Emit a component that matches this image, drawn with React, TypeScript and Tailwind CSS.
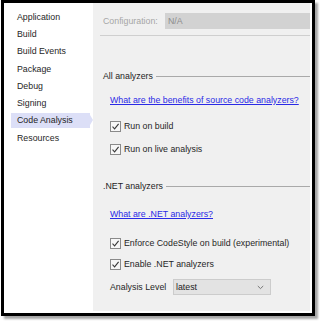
import React from "react";

const font = { fontFamily: '"Liberation Sans", Arial, sans-serif' };

function Check({ label, mt }: { label: string; mt: string }) {
  return (
    <div className={`flex items-center h-[12px] ml-[7px] ${mt}`}>
      <div className="w-[11px] h-[11px] border border-[#8a8a8a] bg-[#f7f7f7] flex items-center justify-center">
        <svg width="9" height="9" viewBox="0 0 9 9">
          <path d="M1.5 4.6 L3.6 6.8 L7.6 1.8" fill="none" stroke="#3a3a3a" strokeWidth="1.1" />
        </svg>
      </div>
      <span className="ml-[3px] text-[#262626]">{label}</span>
    </div>
  );
}

function Section({ label, mt, lineStart }: { label: string; mt: string; lineStart: string }) {
  return (
    <div className={`flex items-center h-[12px] ${mt}`}>
      <span className="text-[#1e1e1e] whitespace-nowrap">{label}</span>
      <div className={`flex-1 h-px bg-[#a9a9a9] ${lineStart}`} />
    </div>
  );
}

export default function App() {
  const items = ["Application", "Build", "Build Events", "Package", "Debug", "Signing", "Code Analysis", "Resources"];
  return (
    <div className="w-[323px] h-[321px] bg-white pl-[1px] text-[8.8px] leading-[12px]" style={font}>
      <div className="w-[314px] h-[316px] border-[3px] border-black shadow-[3px_3px_2px_rgba(0,0,0,0.35)] flex overflow-hidden">
        <div className="w-[89px] bg-white pt-[5px] flex flex-col">
          {items.map((it) => (
            <div key={it} className="h-[17.3px] flex items-center">
              {it === "Code Analysis" ? (
                <div className="ml-[7px] flex items-center h-[15px] w-[82px]">
                  <div className="h-[15px] w-[79px] bg-[#dcdff7] flex items-center pl-[6px] text-[#1e1e1e]">{it}</div>
                  <div className="w-0 h-0 border-y-[5px] border-y-transparent border-l-[3px] border-l-[#dcdff7]" />
                </div>
              ) : (
                <span className="ml-[13px] text-[#262626]">{it}</span>
              )}
            </div>
          ))}
        </div>
        <div className="flex-1 bg-[#f0f0f0] border-r-2 border-b-2 border-white flex flex-col pl-[10px] overflow-hidden">
          <div className="mt-[10px] flex items-center h-[16px]">
            <span className="text-[#a6a6a6] w-[62px]">Configuration:</span>
            <div className="flex-1 h-[16px] bg-[#d2d2d2] flex items-center pl-[3px] text-[#8c8c8c]">N/A</div>
          </div>
          <div className="mt-[6px] ml-[-3px] h-px bg-[#cfcfcf]" />
          <Section label="All analyzers" mt="mt-[34px]" lineStart="ml-[3px]" />
          <div className="mt-[12px] ml-[7px] h-[12px] text-[#2a2ae6] underline whitespace-nowrap">
            What are the benefits of source code analyzers?
          </div>
          <Check label="Run on build" mt="mt-[14px]" />
          <Check label="Run on live analysis" mt="mt-[11px]" />
          <Section label=".NET analyzers" mt="mt-[25px]" lineStart="ml-[3px]" />
          <div className="mt-[16px] ml-[7px] h-[12px] text-[#2a2ae6] underline whitespace-nowrap">
            What are .NET analyzers?
          </div>
          <Check label="Enforce CodeStyle on build (experimental)" mt="mt-[17px]" />
          <Check label="Enable .NET analyzers" mt="mt-[9px]" />
          <div className="mt-[9px] ml-[7px] flex items-center h-[16px]">
            <span className="w-[63px] text-[#262626]">Analysis Level</span>
            <div className="w-[98px] h-[16px] bg-[#e3e3e3] border border-[#cccccc] flex items-center pl-[2px] pr-[6px] justify-between text-[#1e1e1e]">
              <span>latest</span>
              <svg width="7" height="5" viewBox="0 0 7 5">
                <path d="M0.8 1 L3.5 3.6 L6.2 1" fill="none" stroke="#6a6a6a" strokeWidth="0.9" />
              </svg>
            </div>
          </div>
        </div>
      </div>
    </div>
  );
}
